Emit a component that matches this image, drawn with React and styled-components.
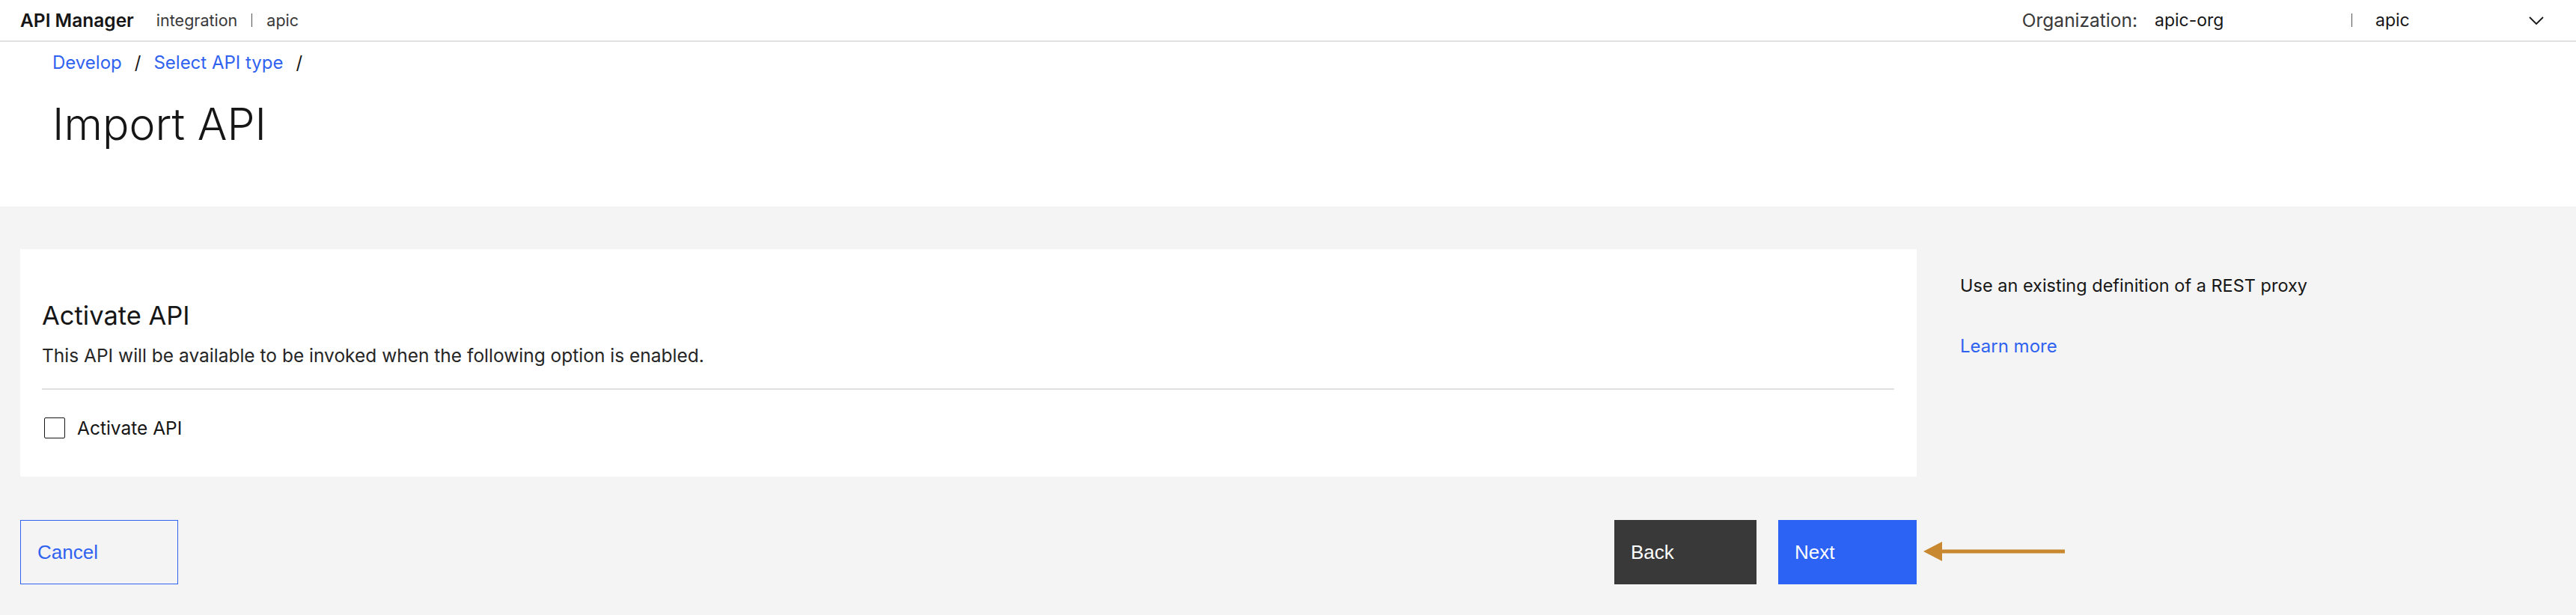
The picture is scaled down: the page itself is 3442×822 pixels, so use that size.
import React from 'react';
import styled, {createGlobalStyle} from 'styled-components';

const Global=createGlobalStyle`
  html,body{margin:0;padding:0;background:#ffffff;}
  body{font-family:Inter,"Noto Sans",sans-serif;color:#161616;}
  *{box-sizing:border-box;}
`;

const Header=styled.header`
  height:56px;
  display:flex;
  align-items:center;
  justify-content:space-between;
  padding-left:27px;
  border-bottom:2px solid #e0e0e0;
`;
const Brand=styled.div`
  display:flex;
  align-items:center;
`;
const ProductName=styled.span`
  font-size:24.5px;
  font-weight:600;
  color:#161616;
  margin-right:30px;
`;
const Context=styled.span`
  font-size:21.5px;
  color:#393939;
`;
const Pipe=styled.span`
  display:inline-block;
  width:1px;
  height:18px;
  background:#525252;
  margin:0 ${({gap})=>gap||18}px;
`;
const OrgArea=styled.div`
  display:flex;
  align-items:center;
  font-size:23px;
`;
const OrgLabel=styled.span`
  color:#393939;
  font-size:24.5px;
  margin-right:23px;
`;
const OrgValue=styled.span`
  width:245px;
  color:#161616;
`;
const SpaceSelect=styled.div`
  display:flex;
  align-items:center;
  justify-content:space-between;
  width:268px;
  margin-left:13px;
  padding-right:43px;
  color:#161616;
`;

const PageHead=styled.section`
  height:220px;
  padding:12px 0 0 70px;
`;
const Crumbs=styled.nav`
  display:flex;
  align-items:center;
  font-size:24px;
  line-height:32px;
`;
const Crumb=styled.a`
  color:#3062f0;
  text-decoration:none;
`;
const Slash=styled.span`
  color:#161616;
  margin:0 17px;
`;
const Title=styled.h1`
  margin:34px 0 0;
  font-size:59px;
  line-height:64px;
  font-weight:300;
  color:#161616;
`;

const Main=styled.main`
  background:#f4f4f4;
  min-height:546px;
  padding:57px 0 0 27px;
  display:grid;
  grid-template-columns:2534px 1fr;
  grid-template-rows:auto auto;
  column-gap:58px;
  row-gap:58px;
  align-content:start;
`;
const Card=styled.div`
  background:#ffffff;
  padding:69px 30px 51px 29px;
`;
const CardTitle=styled.h2`
  margin:0;
  font-size:34.5px;
  line-height:40px;
  font-weight:400;
`;
const CardText=styled.p`
  margin:17px 0 0;
  font-size:24.5px;
  line-height:32px;
  color:#262626;
`;
const Rule=styled.hr`
  border:0;
  height:2px;
  background:#e0e0e0;
  margin:28px 0 37px;
`;
const CheckRow=styled.label`
  display:flex;
  align-items:center;
  gap:16px;
  font-size:24.5px;
  line-height:28px;
  padding-left:3px;
`;
const Box=styled.span`
  width:28px;
  height:28px;
  border:1.5px solid #161616;
  border-radius:2px;
  background:#fff;
`;

const Side=styled.aside`
  padding-top:33px;
  font-size:24px;
  line-height:32px;
`;
const SideText=styled.p`
  margin:0 0 49px;
  font-size:23.5px;
  color:#161616;
`;

const Footer=styled.div`
  display:flex;
  justify-content:space-between;
  align-items:center;
`;
const Right=styled.div`
  display:flex;
  gap:29px;
`;
const Button=styled.button`
  position:relative;
  height:86px;
  width:${({w})=>w}px;
  padding:0 0 0 22px;
  text-align:left;
  font-family:"Liberation Sans",Arial,sans-serif;
  font-size:26px;
  border:${({kind})=>kind==='ghost'?'1.5px solid #3062f0':'0'};
  background:${({kind})=>kind==='primary'?'#2d63f5':kind==='secondary'?'#393939':'transparent'};
  color:${({kind})=>kind==='ghost'?'#3062f0':'#ffffff'};
  cursor:pointer;
`;
const Pointer=styled.svg`
  position:absolute;
  left:100%;
  top:29px;
  margin-left:9px;
`;

export default function App(){
  return (
    <>
      <Global/>
      <Header>
        <Brand>
          <ProductName>API Manager</ProductName>
          <Context>integration</Context>
          <Pipe gap={19}/>
          <Context>apic</Context>
        </Brand>
        <OrgArea>
          <OrgLabel>Organization:</OrgLabel>
          <OrgValue>apic-org</OrgValue>
          <Pipe gap={0}/>
          <SpaceSelect>
            <span>apic</span>
            <svg width="20" height="11" viewBox="0 0 20 11" fill="none">
              <polyline points="1,1 10,10 19,1" stroke="#161616" strokeWidth="1.8"/>
            </svg>
          </SpaceSelect>
        </OrgArea>
      </Header>
      <PageHead>
        <Crumbs>
          <Crumb href="#">Develop</Crumb>
          <Slash>/</Slash>
          <Crumb href="#">Select API type</Crumb>
          <Slash>/</Slash>
        </Crumbs>
        <Title>Import API</Title>
      </PageHead>
      <Main>
        <Card>
          <CardTitle>Activate API</CardTitle>
          <CardText>This API will be available to be invoked when the following option is enabled.</CardText>
          <Rule/>
          <CheckRow>
            <Box/>
            Activate API
          </CheckRow>
        </Card>
        <Side>
          <SideText>Use an existing definition of a REST proxy</SideText>
          <Crumb href="#">Learn more</Crumb>
        </Side>
        <Footer>
          <Button kind="ghost" w={211}>Cancel</Button>
          <Right>
            <Button kind="secondary" w={190}>Back</Button>
            <Button kind="primary" w={185}>
              Next
              <Pointer width="190" height="26" viewBox="0 0 190 26">
                <polygon points="0,13 25,0 25,26" fill="#c8882f"/>
                <rect x="24" y="10.5" width="165" height="5" fill="#c8882f"/>
              </Pointer>
            </Button>
          </Right>
        </Footer>
      </Main>
    </>
  );
}
